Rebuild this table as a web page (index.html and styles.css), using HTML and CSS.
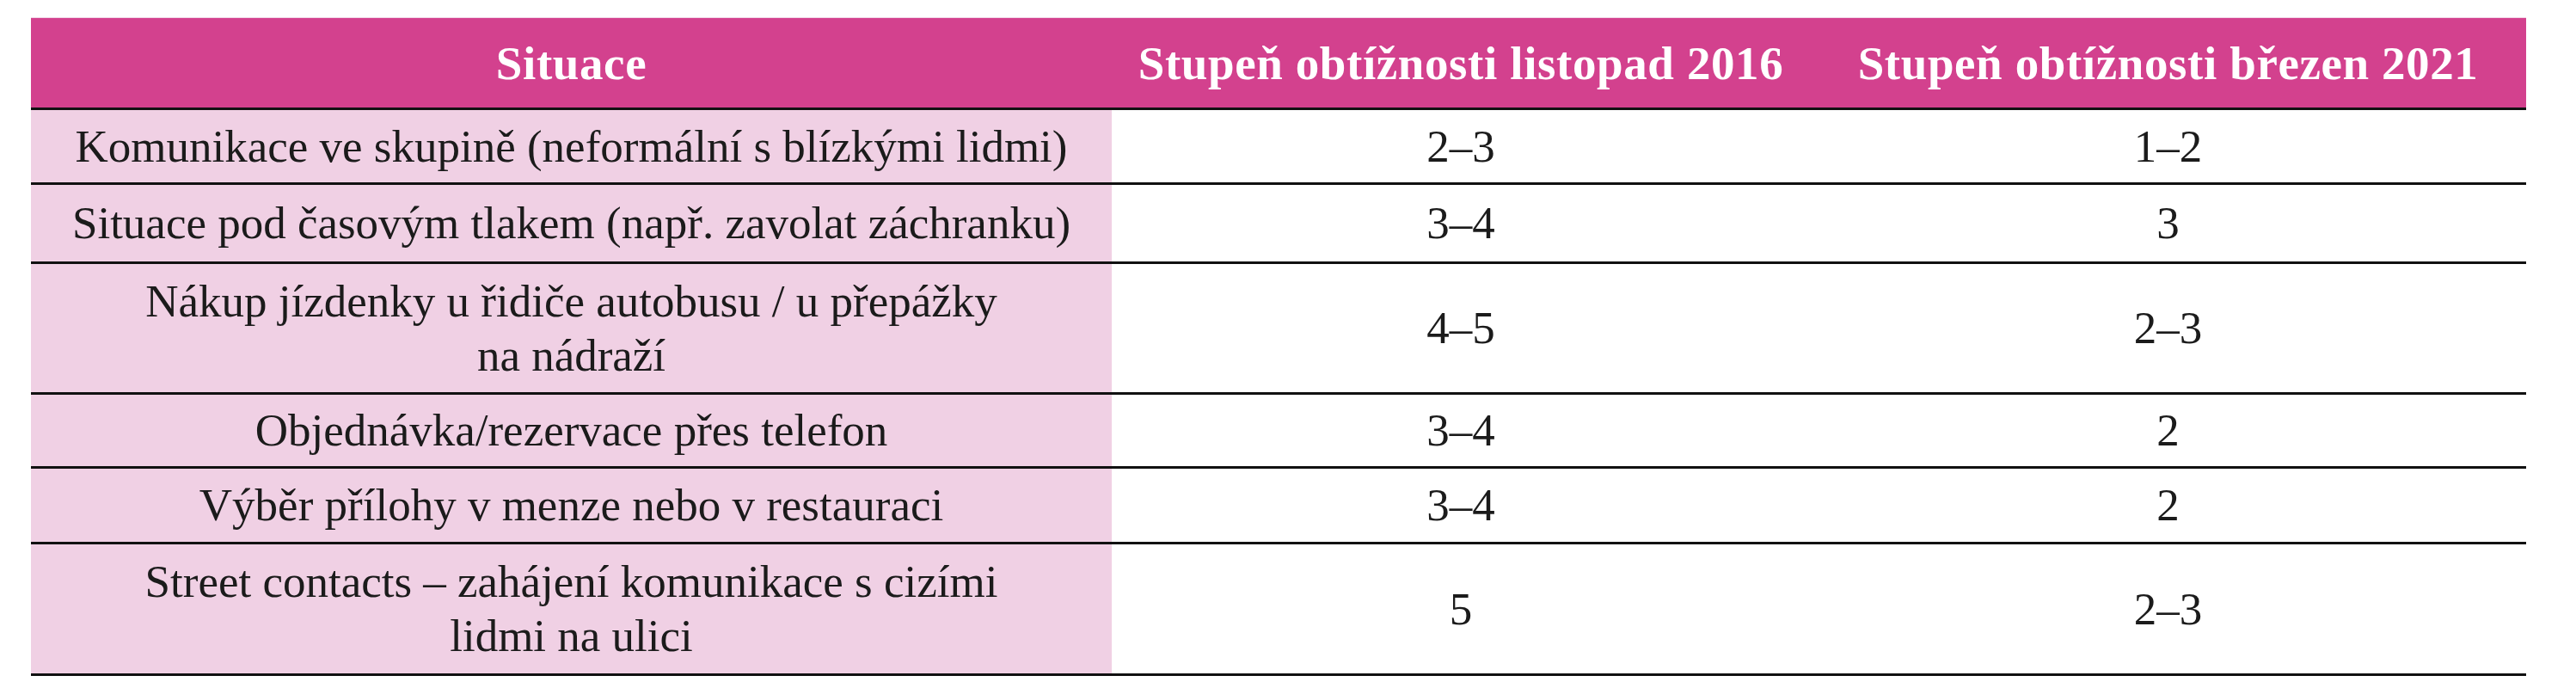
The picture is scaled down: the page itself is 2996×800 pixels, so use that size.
FILE: index.html
```html
<!DOCTYPE html>
<html lang="cs">
<head>
<meta charset="utf-8">
<title>Stupeň obtížnosti</title>
<link rel="stylesheet" href="styles.css">
</head>
<body>
<table class="grid">
  <colgroup>
    <col class="c1">
    <col class="c2">
    <col class="c3">
  </colgroup>
  <thead>
    <tr class="head">
      <th>Situace</th>
      <th>Stupeň obtížnosti listopad 2016</th>
      <th>Stupeň obtížnosti březen 2021</th>
    </tr>
  </thead>
  <tbody>
    <tr class="r1">
      <td class="sit">Komunikace ve skupině (neformální s blízkými lidmi)</td>
      <td>2–3</td>
      <td>1–2</td>
    </tr>
    <tr class="r2">
      <td class="sit">Situace pod časovým tlakem (např. zavolat záchranku)</td>
      <td>3–4</td>
      <td>3</td>
    </tr>
    <tr class="r3">
      <td class="sit">Nákup jízdenky u řidiče autobusu / u přepážky<br>na nádraží</td>
      <td>4–5</td>
      <td>2–3</td>
    </tr>
    <tr class="r4">
      <td class="sit">Objednávka/rezervace přes telefon</td>
      <td>3–4</td>
      <td>2</td>
    </tr>
    <tr class="r5">
      <td class="sit">Výběr přílohy v menze nebo v restauraci</td>
      <td>3–4</td>
      <td>2</td>
    </tr>
    <tr class="r6">
      <td class="sit">Street contacts – zahájení komunikace s cizími<br>lidmi na ulici</td>
      <td>5</td>
      <td>2–3</td>
    </tr>
  </tbody>
</table>
</body>
</html>
```
FILE: styles.css
```css
html, body {
  margin: 0;
  padding: 0;
  background: #ffffff;
}
body {
  padding: 20px 0 0 36px;
  font-family: "Liberation Serif", "Times New Roman", serif;
  color: #1b1b1b;
}
.grid {
  border-collapse: collapse;
  table-layout: fixed;
  width: 2902px;
}
.c1 { width: 1257px; }
.c2 { width: 812px; }
.c3 { width: 833px; }
.grid th, .grid td {
  padding: 0;
  text-align: center;
  vertical-align: middle;
}
.head th {
  background: #d3418e;
  color: #ffffff;
  font-weight: bold;
  font-size: 55px;
  letter-spacing: 0.6px;
  height: 104px;
  border-top: 1px solid #f2d6e6;
  border-bottom: 3px solid #111111;
}
.grid td {
  font-size: 53px;
  line-height: 63px;
  border-bottom: 3px solid #111111;
}
.grid td.sit {
  background: #f0d0e4;
}
.r1 td { height: 84px; }
.r2 td { height: 89px; }
.r3 td { height: 149px; }
.r4 td { height: 83px; }
.r5 td { height: 85px; }
.r6 td { height: 150px; }
```
